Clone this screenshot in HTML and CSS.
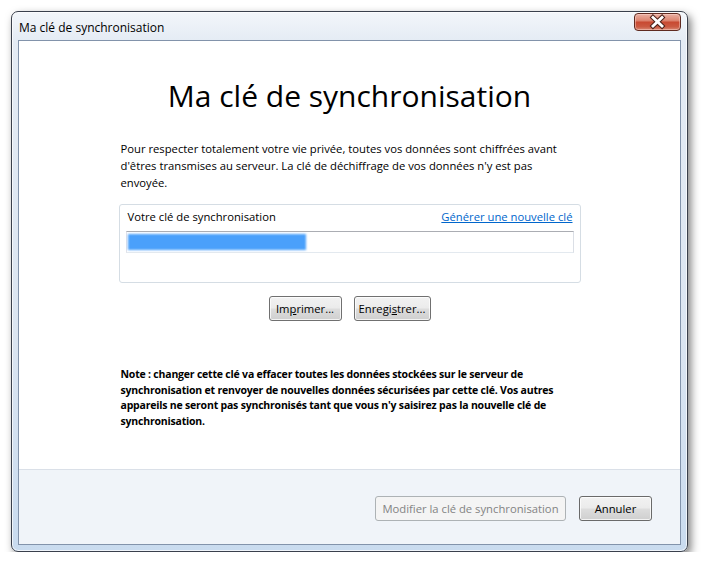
FILE: index.html
```html
<!DOCTYPE html>
<html lang="fr">
<head>
<meta charset="utf-8">
<title>Ma clé de synchronisation</title>
<link rel="stylesheet" href="styles.css">
</head>
<body>
<div class="window">
  <div class="titlebar">
    <span class="title">Ma clé de synchronisation</span>
    <div class="close">
      <svg width="45" height="16" viewBox="0 0 45 16">
        <path d="M18 3.5 L27 12 M27 3.5 L18 12" stroke="#4a2018" stroke-width="4.8" stroke-linecap="square" fill="none"/>
        <path d="M18 3.5 L27 12 M27 3.5 L18 12" stroke="#ffffff" stroke-width="2.8" stroke-linecap="square" fill="none"/>
      </svg>
    </div>
  </div>
  <div class="client">
    <div class="content">
      <h1 class="heading">Ma clé de synchronisation</h1>
      <div class="column">
        <p class="intro">Pour respecter totalement votre vie privée, toutes vos données sont chiffrées avant d'êtres transmises au serveur. La clé de déchiffrage de vos données n'y est pas envoyée.</p>
        <div class="group">
          <div class="group-head">
            <span>Votre clé de synchronisation</span>
            <a class="link" href="#">Générer une nouvelle clé</a>
          </div>
          <div class="input"><span class="sel"></span></div>
        </div>
        <div class="actions">
          <button class="btn btn-print">Im<u>p</u>rimer...</button>
          <button class="btn btn-save">Enregi<u>s</u>trer...</button>
        </div>
        <p class="note">Note : changer cette clé va effacer toutes les données stockées sur le serveur de synchronisation et renvoyer de nouvelles données sécurisées par cette clé. Vos autres appareils ne seront pas synchronisés tant que vous n'y saisirez pas la nouvelle clé de synchronisation.</p>
      </div>
    </div>
    <div class="footer">
      <button class="btn btn-modify" disabled>Modifier la clé de synchronisation</button>
      <button class="btn btn-cancel">Annuler</button>
    </div>
  </div>
</div>
</body>
</html>
```

FILE: styles.css
```css
html, body {
  margin: 0;
  background: #ffffff;
}
body {
  font-family: "Open Sans", "Liberation Sans", sans-serif;
  font-size: 11.25px;
  color: #000;
}
.window {
  box-sizing: border-box;
  width: 677px;
  height: 541px;
  margin: 11px 0 0 11px;
  border: 1px solid #3a404c;
  border-radius: 7px;
  padding: 0 6px 6px;
  display: flex;
  flex-direction: column;
  background: linear-gradient(to bottom, #f3f6fa 0px, #e4ebf4 30px, #dbe5f1 60%, #c9dbef 100%);
  box-shadow: 3px 4px 9px rgba(0, 0, 0, 0.5), inset 0 0 0 1px rgba(255,255,255,0.7);
}
.titlebar {
  height: 28px;
  display: flex;
  justify-content: space-between;
  align-items: flex-start;
  flex: none;
}
.title {
  padding: 8px 0 0 1px;
  font-size: 12px;
  line-height: 15px;
  color: #000;
}
.close {
  margin-top: 1px;
  width: 47px;
  height: 18px;
  box-sizing: border-box;
  border: 1px solid #5f2a20;
  border-radius: 4px;
  background: linear-gradient(to bottom, #eab0a3 0%, #dd8672 40%, #c84a32 52%, #cb5a42 80%, #d98a76 100%);
  box-shadow: inset 0 0 0 1px rgba(255, 220, 210, 0.45);
  display: flex;
}
.close svg {
  display: block;
}
.client {
  flex: 1;
  border: 1px solid #8293ab;
  background: #ffffff;
  display: flex;
  flex-direction: column;
}
.content {
  flex: 1;
  padding-top: 37px;
}
.heading {
  margin: 0;
  text-align: center;
  font-weight: 400;
  font-size: 30px;
  line-height: 36px;
  color: #000;
}
.column {
  width: 462px;
  margin: 0 auto;
}
.intro {
  margin: 26px 0 0;
  padding-left: 2px;
  max-width: 446px;
  line-height: 17px;
}
.group {
  margin-top: 13px;
  box-sizing: border-box;
  height: 79px;
  border: 1px solid #d5dde4;
  border-radius: 3px;
  padding: 3px 6px 0;
}
.group-head {
  display: flex;
  justify-content: space-between;
  line-height: 17px;
  padding: 0 1px 0 2px;
}
.link {
  color: #0066cc;
  text-decoration: underline;
}
.input {
  margin-top: 6px;
  height: 22px;
  box-sizing: border-box;
  border: 1px solid;
  border-color: #abadb3 #dbdfe6 #e3e9ef #e2e3ea;
  padding: 2px 1px;
}
.sel {
  display: block;
  width: 178px;
  height: 16px;
  background: #4aa0fb;
  filter: blur(1.3px);
}
.actions {
  margin-top: 13px;
  display: flex;
  justify-content: center;
  gap: 12px;
}
.btn {
  height: 25px;
  box-sizing: border-box;
  border: 1px solid #707070;
  border-radius: 3px;
  background: linear-gradient(to bottom, #f2f2f2 0%, #ebebeb 48%, #dddddd 52%, #cfcfcf 100%);
  box-shadow: inset 0 0 0 1px rgba(255, 255, 255, 0.75);
  font-family: "Open Sans", "Liberation Sans", sans-serif;
  font-size: 11.25px;
  color: #000;
  padding: 0;
}
.btn-print { width: 73px; }
.btn-save { width: 77px; }
.btn-modify {
  width: 191px;
  border-color: #adb2b5;
  background: #f4f4f4;
  box-shadow: none;
  color: #838383;
}
.btn-cancel {
  width: 73px;
  border-color: #6a6a6a;
}
.note {
  margin: 46px 0 0;
  padding-left: 2px;
  font-weight: 700;
  font-size: 10.5px;
  letter-spacing: -0.2px;
  line-height: 15.5px;
}
.footer {
  flex: none;
  box-sizing: border-box;
  height: 75px;
  border-top: 1px solid #dae0e8;
  background: #f0f4f9;
  display: flex;
  justify-content: flex-end;
  align-items: flex-start;
  gap: 13px;
  padding: 26px 28px 0 0;
}
```
